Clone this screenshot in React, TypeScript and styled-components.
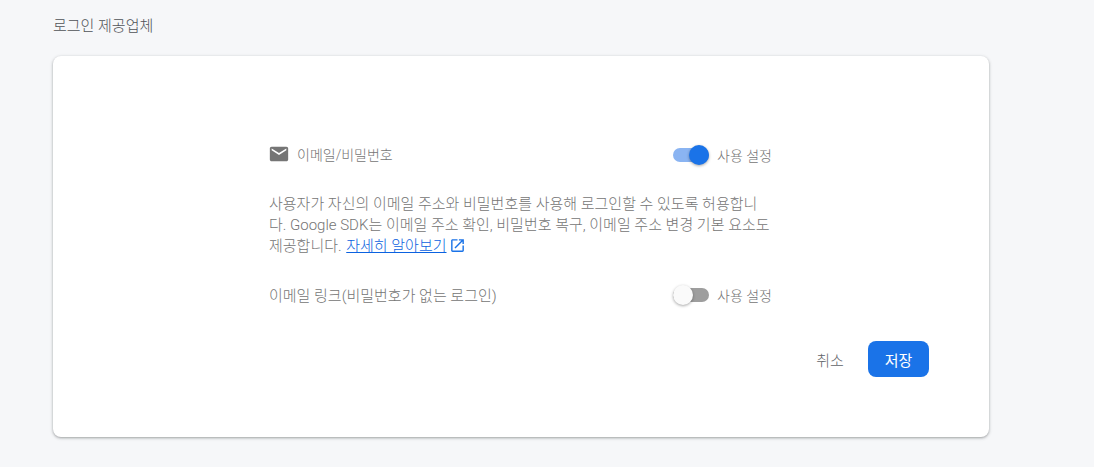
import styled, { createGlobalStyle } from 'styled-components'

const Global = createGlobalStyle`
  html, body {
    margin: 0;
    padding: 0;
    background: #f6f7f9;
    font-family: Roboto, "Noto Sans CJK KR", sans-serif;
    overflow: hidden;
  }
`

const Page = styled.div`
  width: 1094px;
  height: 467px;
  padding: 16px 0 0 53px;
  box-sizing: border-box;
`

const Heading = styled.h2`
  margin: 0 0 19px;
  font-size: 15px;
  line-height: 21px;
  font-weight: 300;
  color: #4f5357;
`

const Card = styled.div`
  width: 936px;
  height: 381px;
  box-sizing: border-box;
  padding: 79px 60px 0 216px;
  background: #fff;
  border-radius: 8px;
  box-shadow: 0 1px 2px rgba(60, 64, 67, 0.3), 0 1px 3px 1px rgba(60, 64, 67, 0.15);
`

const Row = styled.div`
  width: 504px;
  height: 40px;
  display: flex;
  align-items: center;
  justify-content: space-between;
`

const ProviderLabel = styled.div`
  display: flex;
  align-items: center;
  gap: 7px;
  margin: 0 0 3px -1px;
  font-size: 14px;
  font-weight: 300;
  color: #757575;
`

const OptionLabel = styled.div`
  margin-bottom: 1px;
  font-size: 15px;
  font-weight: 300;
  color: #757575;
`

const ToggleWrap = styled.div`
  width: 100px;
  display: flex;
  align-items: center;
  gap: 8px;
  font-size: 14px;
  font-weight: 300;
  color: #757575;
  white-space: nowrap;
`

const Track = styled.span<{ $on: boolean }>`
  position: relative;
  display: block;
  flex: none;
  width: 36px;
  height: 14px;
  border-radius: 7px;
  background: ${p => (p.$on ? '#8ab4f2' : '#9e9e9e')};
`

const Thumb = styled.span<{ $on: boolean }>`
  position: absolute;
  top: -3px;
  left: ${p => (p.$on ? '16px' : '0')};
  width: 20px;
  height: 20px;
  border-radius: 50%;
  background: ${p => (p.$on ? '#1a73e8' : '#fafafa')};
  box-shadow: 0 1px 3px rgba(0, 0, 0, 0.35);
`

const Description = styled.p`
  width: 504px;
  margin: 19px 0 18px;
  font-size: 15px;
  font-weight: 300;
  line-height: 21px;
  color: #757575;

  a {
    margin-left: 1px;
    color: #0b62e0;
    text-decoration: underline;
  }

  svg {
    margin-left: 2px;
    vertical-align: -3px;
  }
`

const Actions = styled.div`
  display: flex;
  justify-content: flex-end;
  align-items: center;
  gap: 8px;
  margin-top: 26px;
`

const CancelButton = styled.button`
  width: 60px;
  height: 36px;
  border: 0;
  background: transparent;
  font: inherit;
  font-size: 15px;
  font-weight: 300;
  color: #5f6368;
`

const SaveButton = styled.button`
  width: 61px;
  height: 36px;
  border: 0;
  border-radius: 8px;
  background: #1a73e8;
  font: inherit;
  font-size: 15px;
  color: #fff;
`

function Toggle({ on }: { on: boolean }) {
  return (
    <ToggleWrap>
      <Track $on={on}>
        <Thumb $on={on} />
      </Track>
      사용 설정
    </ToggleWrap>
  )
}

export default function App() {
  return (
    <Page>
      <Global />
      <Heading>로그인 제공업체</Heading>
      <Card>
        <Row>
          <ProviderLabel>
            <svg width="22" height="22" viewBox="0 0 24 24" fill="#757575">
              <path d="M20 4H4c-1.100 0-2 .9-2 2v12c0 1.100.9 2 2 2h16c1.100 0 2-.9 2-2V6c0-1.100-.9-2-2-2zm0 4-8 5-8-5V6l8 5 8-5v2z" />
            </svg>
            이메일/비밀번호
          </ProviderLabel>
          <Toggle on />
        </Row>
        <Description>
          사용자가 자신의 이메일 주소와 비밀번호를 사용해 로그인할 수 있도록 허용합니다. Google SDK는 이메일 주소 확인,
          비밀번호 복구, 이메일 주소 변경 기본 요소도 제공합니다. <a href="#more">자세히 알아보기</a>
          <svg width="17" height="17" viewBox="0 0 24 24" fill="#1a73e8">
            <path d="M19 19H5V5h7V3H5c-1.110 0-2 .9-2 2v14c0 1.100.89 2 2 2h14c1.100 0 2-.9 2-2v-7h-2v7zM14 3v2h3.590l-9.830 9.830 1.410 1.410L19 6.410V10h2V3h-7z" />
          </svg>
        </Description>
        <Row>
          <OptionLabel>이메일 링크(비밀번호가 없는 로그인)</OptionLabel>
          <Toggle on={false} />
        </Row>
        <Actions>
          <CancelButton>취소</CancelButton>
          <SaveButton>저장</SaveButton>
        </Actions>
      </Card>
    </Page>
  )
}
